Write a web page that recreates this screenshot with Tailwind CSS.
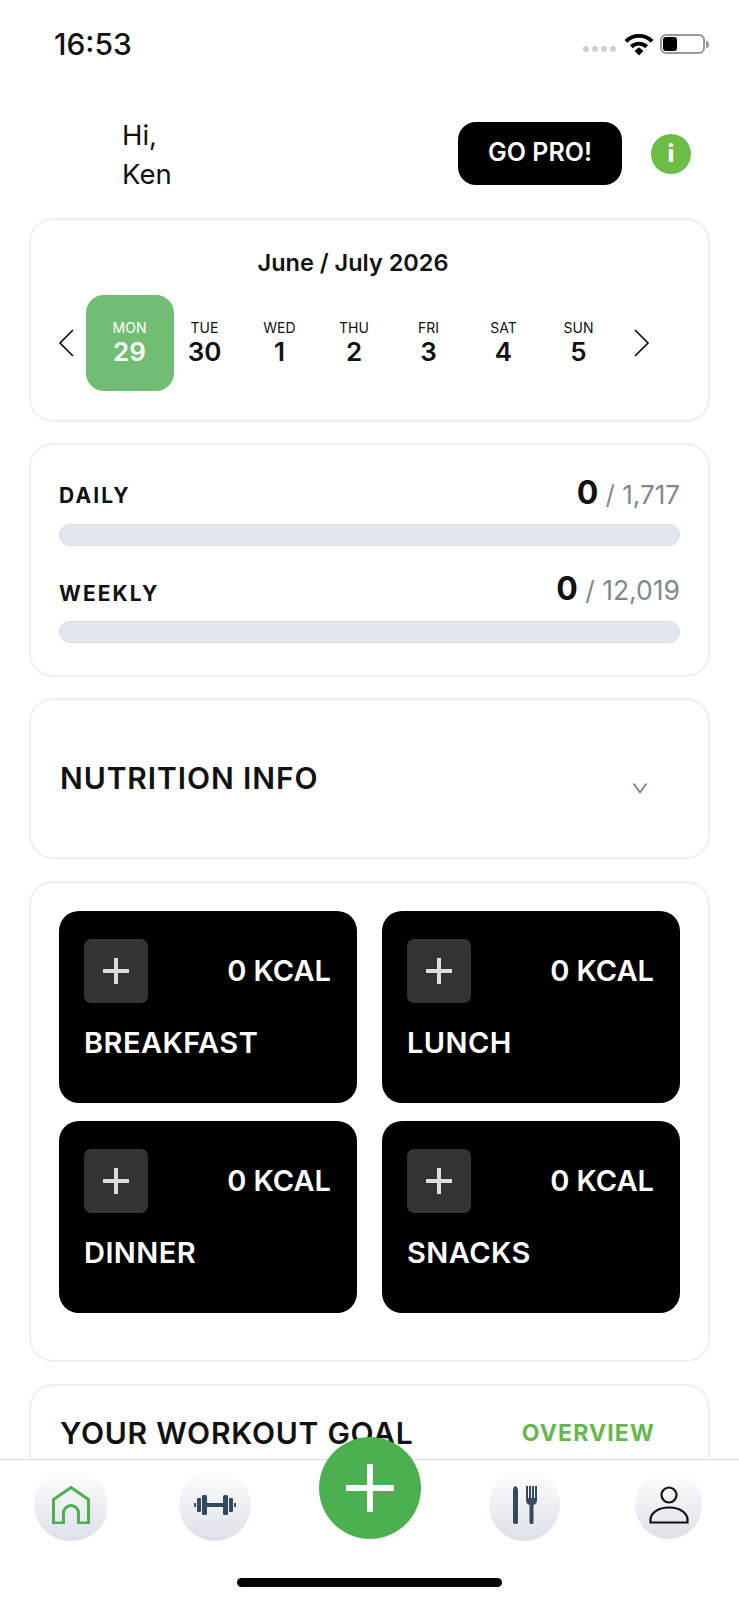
<!DOCTYPE html>
<html lang="en">
<head>
    <meta charset="UTF-8">
    <title>Home</title>
    <script src="https://cdn.jsdelivr.net/npm/@tailwindcss/browser@4"></script>
</head>
<body class="bg-white">
<div class="relative flex flex-col h-[1600px] overflow-hidden font-['Inter',sans-serif] text-[#111]">

    <!-- status bar -->
    <div class="flex items-center justify-between h-[88px] shrink-0 pl-[54px] pr-[30px]">
        <span class="text-[30px] font-medium">16:53</span>
        <div class="flex items-center">
            <div class="flex gap-[3px] mt-[10px] mr-[7px]">
                <span class="w-[6px] h-[6px] rounded-full bg-[#cfcfcf]"></span>
                <span class="w-[6px] h-[6px] rounded-full bg-[#cfcfcf]"></span>
                <span class="w-[6px] h-[6px] rounded-full bg-[#cfcfcf]"></span>
                <span class="w-[6px] h-[6px] rounded-full bg-[#cfcfcf]"></span>
            </div>
            <svg class="w-[32px] h-[24px] mr-[5px]" viewBox="0 0 28 22" fill="none">
                <path d="M2 8.500a17 17 0 0 1 24 0" stroke="#000" stroke-width="3.600"/>
                <path d="M7 13.500a10 10 0 0 1 14 0" stroke="#000" stroke-width="3.600"/>
                <path d="M10 17.500l4-3.500 4 3.500-4 4z" fill="#000"/>
            </svg>
            <div class="flex items-center h-[20px] w-[45px] rounded-[6px] border-2 border-[#999] p-[1px]">
                <div class="h-full w-[14px] rounded-[3px] bg-black"></div>
            </div>
            <div class="w-[3px] h-[7px] ml-[1px] rounded-r-full bg-[#999]"></div>
        </div>
    </div>

    <!-- greeting -->
    <div class="flex items-center justify-between h-[130px] shrink-0 pl-[122px] pr-[48px]">
        <p class="mt-[3px] text-[27.500px] leading-[39px]">Hi,<br>Ken</p>
        <div class="flex items-center gap-[29px]">
            <button class="flex items-center justify-center w-[164px] h-[63px] rounded-[18px] bg-black text-white text-[25px] font-semibold">GO PRO!</button>
            <div class="flex items-center justify-center w-[40px] h-[40px] mt-[1px] rounded-full bg-[#6bbd45] text-white text-[24px] font-extrabold">i</div>
        </div>
    </div>

    <main class="flex-1 flex flex-col gap-[22px] px-[29px] overflow-hidden">

        <!-- calendar -->
        <section class="h-[204px] shrink-0 rounded-[24px] border-2 border-[#f0f0f0]">
            <h2 class="pt-[27px] pr-[33px] text-center text-[23.500px] leading-[32px] font-semibold">June / July 2026</h2>
            <div class="flex items-center h-[96px] mt-[16px]">
                <svg class="w-[18px] h-[30px] ml-[26px] mr-[17px] shrink-0" viewBox="0 0 18 30" fill="none"><path d="M16 2L3 15l13 13" stroke="#111" stroke-width="1.700"/></svg>
                <div class="flex w-[75px] justify-center shrink-0">
                    <div class="flex flex-col items-center justify-center shrink-0 w-[88px] h-[96px] pb-[3px] rounded-[18px] bg-[#72bd74] text-white">
                        <span class="text-[14px] leading-[20px]">MON</span>
                        <span class="text-[26px] leading-[28px] font-semibold">29</span>
                    </div>
                </div>
                <div class="flex flex-col items-center w-[75px] shrink-0 pb-[3px]">
                    <span class="text-[14px] leading-[20px]">TUE</span>
                    <span class="text-[26px] leading-[28px] font-semibold">30</span>
                </div>
                <div class="flex flex-col items-center w-[75px] shrink-0 pb-[3px]">
                    <span class="text-[14px] leading-[20px]">WED</span>
                    <span class="text-[26px] leading-[28px] font-semibold">1</span>
                </div>
                <div class="flex flex-col items-center w-[74px] shrink-0 pb-[3px]">
                    <span class="text-[14px] leading-[20px]">THU</span>
                    <span class="text-[26px] leading-[28px] font-semibold">2</span>
                </div>
                <div class="flex flex-col items-center w-[75px] shrink-0 pb-[3px]">
                    <span class="text-[14px] leading-[20px]">FRI</span>
                    <span class="text-[26px] leading-[28px] font-semibold">3</span>
                </div>
                <div class="flex flex-col items-center w-[75px] shrink-0 pb-[3px]">
                    <span class="text-[14px] leading-[20px]">SAT</span>
                    <span class="text-[26px] leading-[28px] font-semibold">4</span>
                </div>
                <div class="flex flex-col items-center w-[75px] shrink-0 pb-[3px]">
                    <span class="text-[14px] leading-[20px]">SUN</span>
                    <span class="text-[26px] leading-[28px] font-semibold">5</span>
                </div>
                <svg class="w-[18px] h-[30px] ml-[17px] shrink-0" viewBox="0 0 18 30" fill="none"><path d="M2 2l13 13L2 28" stroke="#111" stroke-width="1.700"/></svg>
            </div>
        </section>

        <!-- daily / weekly -->
        <section class="h-[234px] -mt-px shrink-0 px-[28px] pt-[25px] rounded-[24px] border-2 border-[#f0f0f0]">
            <div class="flex items-center justify-between h-[44px]">
                <span class="mt-[8px] text-[21px] font-bold tracking-[0.1em]">DAILY</span>
                <span class="mt-[2px] text-[26px] text-[#7d8a96]"><b class="text-[32px] font-bold text-[#111]">0</b> / 1,717</span>
            </div>
            <div class="h-[22px] mt-[10px] rounded-full bg-[#e2e7ee] border border-[#d8dee6]"></div>
            <div class="flex items-center justify-between h-[44px] mt-[24px]">
                <span class="mt-[4px] text-[21px] font-bold tracking-[0.1em]">WEEKLY</span>
                <span class="-mt-[6px] text-[26.500px] text-[#7d8a96]"><b class="text-[32px] font-bold text-[#111]">0</b> / 12,019</span>
            </div>
            <div class="h-[22px] mt-[7px] rounded-full bg-[#e2e7ee] border border-[#d8dee6]"></div>
        </section>

        <!-- nutrition -->
        <section class="flex items-center justify-between h-[161px] -mt-px shrink-0 pl-[29px] pr-[60px] rounded-[24px] border-2 border-[#f0f0f0]">
            <h2 class="text-[30px] font-semibold tracking-[0.03em]">NUTRITION INFO</h2>
            <svg class="w-[16px] h-[12px] mt-[18px]" viewBox="0 0 16 12" fill="none"><path d="M1.500 1.500L8 10.500l6.500-9" stroke="#64748b" stroke-width="1.500"/></svg>
        </section>

        <!-- meals -->
        <section class="grid grid-cols-[298px_298px] gap-x-[25px] gap-y-[18px] content-start h-[481px] shrink-0 px-[28px] pt-[28px] rounded-[24px] border-2 border-[#f0f0f0]">
            <div class="h-[192px] pl-[25px] pr-[26px] pt-[28px] rounded-[20px] bg-black text-white">
                <div class="flex items-center justify-between">
                    <div class="flex items-center justify-center w-[64px] h-[64px] rounded-[7px] bg-[#333]">
                        <svg class="w-[28px] h-[28px]" viewBox="0 0 28 28" fill="#ddd"><rect x="12" y="1" width="4" height="26"/><rect x="1" y="12" width="26" height="4"/></svg>
                    </div>
                    <span class="text-[29px] font-semibold">0 KCAL</span>
                </div>
                <div class="mt-[20px] text-[29px] leading-[40px] font-semibold tracking-[0.015em]">BREAKFAST</div>
            </div>
            <div class="h-[192px] pl-[25px] pr-[26px] pt-[28px] rounded-[20px] bg-black text-white">
                <div class="flex items-center justify-between">
                    <div class="flex items-center justify-center w-[64px] h-[64px] rounded-[7px] bg-[#333]">
                        <svg class="w-[28px] h-[28px]" viewBox="0 0 28 28" fill="#ddd"><rect x="12" y="1" width="4" height="26"/><rect x="1" y="12" width="26" height="4"/></svg>
                    </div>
                    <span class="text-[29px] font-semibold">0 KCAL</span>
                </div>
                <div class="mt-[20px] text-[29px] leading-[40px] font-semibold tracking-[0.015em]">LUNCH</div>
            </div>
            <div class="h-[192px] pl-[25px] pr-[26px] pt-[28px] rounded-[20px] bg-black text-white">
                <div class="flex items-center justify-between">
                    <div class="flex items-center justify-center w-[64px] h-[64px] rounded-[7px] bg-[#333]">
                        <svg class="w-[28px] h-[28px]" viewBox="0 0 28 28" fill="#ddd"><rect x="12" y="1" width="4" height="26"/><rect x="1" y="12" width="26" height="4"/></svg>
                    </div>
                    <span class="text-[29px] font-semibold">0 KCAL</span>
                </div>
                <div class="mt-[20px] text-[29px] leading-[40px] font-semibold tracking-[0.015em]">DINNER</div>
            </div>
            <div class="h-[192px] pl-[25px] pr-[26px] pt-[28px] rounded-[20px] bg-black text-white">
                <div class="flex items-center justify-between">
                    <div class="flex items-center justify-center w-[64px] h-[64px] rounded-[7px] bg-[#333]">
                        <svg class="w-[28px] h-[28px]" viewBox="0 0 28 28" fill="#ddd"><rect x="12" y="1" width="4" height="26"/><rect x="1" y="12" width="26" height="4"/></svg>
                    </div>
                    <span class="text-[29px] font-semibold">0 KCAL</span>
                </div>
                <div class="mt-[20px] text-[29px] leading-[40px] font-semibold tracking-[0.015em]">SNACKS</div>
            </div>
        </section>

        <!-- workout goal, cut off by the tab bar -->
        <section class="flex justify-between h-[200px] shrink-0 items-start pl-[29px] pr-[53px] pt-[27px] rounded-t-[24px] border-2 border-[#f0f0f0]">
            <h2 class="text-[30px] leading-[40px] font-semibold tracking-[0.025em]">YOUR WORKOUT GOAL</h2>
            <a class="text-[23px] leading-[40px] font-bold tracking-[0.05em] text-[#65b84b]">OVERVIEW</a>
        </section>
    </main>

    <!-- tab bar -->
    <nav class="relative h-[141px] shrink-0 bg-white border-t border-[#ddd]">
        <div class="flex items-start justify-between h-[81px] pl-[34px] pr-[37px] pt-[9px]">
            <div class="flex items-center justify-center w-[74px] h-[72px] rounded-full bg-linear-to-b from-white to-[#dde0e8]">
                <svg class="w-[38px] h-[38px]" viewBox="0 0 38 38" fill="none"><path d="M1.500 37V13.500L19 1.500l17.500 12V37H26.500V27a7.500 7.500 0 0 0-15 0V37z" stroke="#4caf50" stroke-width="3"/></svg>
            </div>
            <div class="flex items-center justify-center w-[72px] h-[72px] -ml-[1px] rounded-full bg-linear-to-b from-white to-[#dde0e8]">
                <svg class="w-[42px] h-[20px]" viewBox="0 0 42 20" fill="#34495e"><rect x="0" y="8" width="2" height="4"/><rect x="3" y="3" width="4" height="14" rx="1"/><rect x="8" y="0" width="5" height="20" rx="1.500"/><rect x="13" y="8" width="16" height="4"/><rect x="29" y="0" width="5" height="20" rx="1.500"/><rect x="35" y="3" width="4" height="14" rx="1"/><rect x="40" y="8" width="2" height="4"/></svg>
            </div>
            <div class="w-[102px] shrink-0"></div>
            <div class="flex items-center justify-center w-[71px] h-[72px] -ml-[8px] mr-[3px] rounded-full bg-linear-to-b from-white to-[#dde0e8]">
                <svg class="w-[24px] h-[38px]" viewBox="0 0 24 38" fill="#34495e"><path d="M0 5q0-4 2.500-5Q5 1 5 5v31.500q0 1.500-2.500 1.500T0 36.500z"/><rect x="13" y="0" width="2" height="13"/><rect x="16" y="0" width="2" height="13"/><rect x="19" y="0" width="2" height="13"/><rect x="22" y="0" width="2" height="13"/><path d="M13 12h11v2q0 4-3.500 5v17.500q0 1.500-2 1.500t-2-1.500V19Q13 18 13 14z"/></svg>
            </div>
            <div class="flex items-center justify-center w-[67px] h-[68px] mt-[2px] rounded-full bg-linear-to-b from-white to-[#dde0e8]">
                <svg class="w-[40px] h-[38px]" viewBox="0 0 40 38" fill="none" stroke="#111" stroke-width="2.200"><circle cx="20" cy="9" r="7.500"/><path d="M1.500 36.500v-3C1.500 27 9 21.500 20 21.500S38.500 27 38.500 33.500v3z"/></svg>
            </div>
        </div>
        <div class="w-[265px] h-[9px] mx-auto mt-[37px] rounded-full bg-black"></div>

        <!-- add button sits over the top edge -->
        <button class="absolute left-[319px] top-[-23px] flex items-center justify-center w-[102px] h-[102px] rounded-full bg-[#4caf50]">
            <svg class="w-[48px] h-[48px]" viewBox="0 0 48 48" fill="#fff"><rect x="21" y="0" width="6" height="48"/><rect x="0" y="21" width="48" height="6"/></svg>
        </button>
    </nav>
</div>
</body>
</html>
